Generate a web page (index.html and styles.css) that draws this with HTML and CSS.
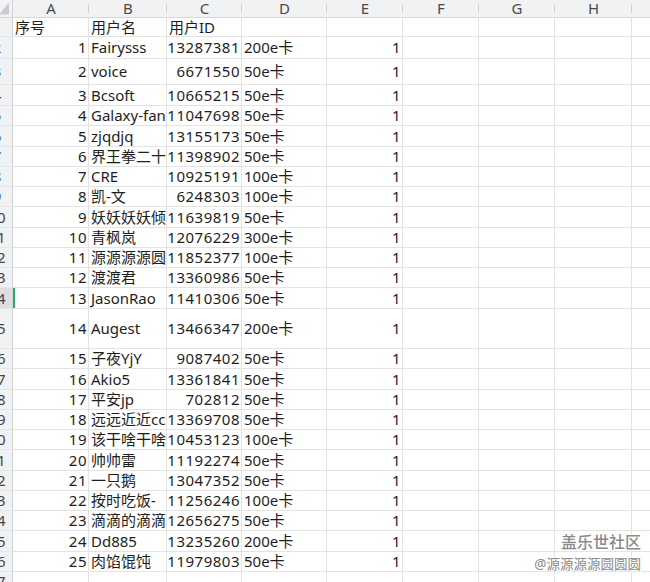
FILE: index.html
```html
<!DOCTYPE html>
<html lang="zh">
<head>
<meta charset="utf-8">
<title>Sheet</title>
<link rel="stylesheet" href="styles.css">
</head>
<body>
<div class="sheet">
  <div class="c corner"><span class="tri"></span></div><div class="c hd">A</div><div class="c hd">B</div><div class="c hd">C</div><div class="c hd">D</div><div class="c hd">E</div><div class="c hd">F</div><div class="c hd">G</div><div class="c hd">H</div><div class="c hd"></div>

  <div class="c rn">1</div><div class="c">序号</div><div class="c">用户名</div><div class="c">用户ID</div><div class="c"></div><div class="c"></div><div class="c"></div><div class="c"></div><div class="c"></div><div class="c"></div>
  <div class="c rn">2</div><div class="c n">1</div><div class="c">Fairysss</div><div class="c n">13287381</div><div class="c">200e卡</div><div class="c n">1</div><div class="c"></div><div class="c"></div><div class="c"></div><div class="c"></div>
  <div class="c rn">3</div><div class="c n">2</div><div class="c">voice</div><div class="c n">6671550</div><div class="c">50e卡</div><div class="c n">1</div><div class="c"></div><div class="c"></div><div class="c"></div><div class="c"></div>
  <div class="c rn">4</div><div class="c n">3</div><div class="c">Bcsoft</div><div class="c n">10665215</div><div class="c">50e卡</div><div class="c n">1</div><div class="c"></div><div class="c"></div><div class="c"></div><div class="c"></div>
  <div class="c rn">5</div><div class="c n">4</div><div class="c">Galaxy-fans</div><div class="c n">11047698</div><div class="c">50e卡</div><div class="c n">1</div><div class="c"></div><div class="c"></div><div class="c"></div><div class="c"></div>
  <div class="c rn">6</div><div class="c n">5</div><div class="c">zjqdjq</div><div class="c n">13155173</div><div class="c">50e卡</div><div class="c n">1</div><div class="c"></div><div class="c"></div><div class="c"></div><div class="c"></div>
  <div class="c rn">7</div><div class="c n">6</div><div class="c">界王拳二十倍</div><div class="c n">11398902</div><div class="c">50e卡</div><div class="c n">1</div><div class="c"></div><div class="c"></div><div class="c"></div><div class="c"></div>
  <div class="c rn">8</div><div class="c n">7</div><div class="c">CRE</div><div class="c n">10925191</div><div class="c">100e卡</div><div class="c n">1</div><div class="c"></div><div class="c"></div><div class="c"></div><div class="c"></div>
  <div class="c rn">9</div><div class="c n">8</div><div class="c">凯-文</div><div class="c n">6248303</div><div class="c">100e卡</div><div class="c n">1</div><div class="c"></div><div class="c"></div><div class="c"></div><div class="c"></div>
  <div class="c rn">10</div><div class="c n">9</div><div class="c">妖妖妖妖倾</div><div class="c n">11639819</div><div class="c">50e卡</div><div class="c n">1</div><div class="c"></div><div class="c"></div><div class="c"></div><div class="c"></div>
  <div class="c rn">11</div><div class="c n">10</div><div class="c">青枫岚</div><div class="c n">12076229</div><div class="c">300e卡</div><div class="c n">1</div><div class="c"></div><div class="c"></div><div class="c"></div><div class="c"></div>
  <div class="c rn">12</div><div class="c n">11</div><div class="c">源源源源圆圆圆</div><div class="c n">11852377</div><div class="c">100e卡</div><div class="c n">1</div><div class="c"></div><div class="c"></div><div class="c"></div><div class="c"></div>
  <div class="c rn">13</div><div class="c n">12</div><div class="c">渡渡君</div><div class="c n">13360986</div><div class="c">50e卡</div><div class="c n">1</div><div class="c"></div><div class="c"></div><div class="c"></div><div class="c"></div>
  <div class="c rn sel-rn">14</div><div class="c n sel">13</div><div class="c">JasonRao</div><div class="c n">11410306</div><div class="c">50e卡</div><div class="c n">1</div><div class="c"></div><div class="c"></div><div class="c"></div><div class="c"></div>
  <div class="c rn">15</div><div class="c n">14</div><div class="c">Augest</div><div class="c n">13466347</div><div class="c">200e卡</div><div class="c n">1</div><div class="c"></div><div class="c"></div><div class="c"></div><div class="c"></div>
  <div class="c rn">16</div><div class="c n">15</div><div class="c">子夜YjY</div><div class="c n">9087402</div><div class="c">50e卡</div><div class="c n">1</div><div class="c"></div><div class="c"></div><div class="c"></div><div class="c"></div>
  <div class="c rn">17</div><div class="c n">16</div><div class="c">Akio5</div><div class="c n">13361841</div><div class="c">50e卡</div><div class="c n">1</div><div class="c"></div><div class="c"></div><div class="c"></div><div class="c"></div>
  <div class="c rn">18</div><div class="c n">17</div><div class="c">平安jp</div><div class="c n">702812</div><div class="c">50e卡</div><div class="c n">1</div><div class="c"></div><div class="c"></div><div class="c"></div><div class="c"></div>
  <div class="c rn">19</div><div class="c n">18</div><div class="c">远远近近ccc</div><div class="c n">13369708</div><div class="c">50e卡</div><div class="c n">1</div><div class="c"></div><div class="c"></div><div class="c"></div><div class="c"></div>
  <div class="c rn">20</div><div class="c n">19</div><div class="c">该干啥干啥</div><div class="c n">10453123</div><div class="c">100e卡</div><div class="c n">1</div><div class="c"></div><div class="c"></div><div class="c"></div><div class="c"></div>
  <div class="c rn">21</div><div class="c n">20</div><div class="c">帅帅雷</div><div class="c n">11192274</div><div class="c">50e卡</div><div class="c n">1</div><div class="c"></div><div class="c"></div><div class="c"></div><div class="c"></div>
  <div class="c rn">22</div><div class="c n">21</div><div class="c">一只鹅</div><div class="c n">13047352</div><div class="c">50e卡</div><div class="c n">1</div><div class="c"></div><div class="c"></div><div class="c"></div><div class="c"></div>
  <div class="c rn">23</div><div class="c n">22</div><div class="c">按时吃饭-</div><div class="c n">11256246</div><div class="c">100e卡</div><div class="c n">1</div><div class="c"></div><div class="c"></div><div class="c"></div><div class="c"></div>
  <div class="c rn">24</div><div class="c n">23</div><div class="c">滴滴的滴滴滴</div><div class="c n">12656275</div><div class="c">50e卡</div><div class="c n">1</div><div class="c"></div><div class="c"></div><div class="c"></div><div class="c"></div>
  <div class="c rn">25</div><div class="c n">24</div><div class="c">Dd885</div><div class="c n">13235260</div><div class="c">200e卡</div><div class="c n">1</div><div class="c"></div><div class="c"></div><div class="c"></div><div class="c"></div>
  <div class="c rn">26</div><div class="c n">25</div><div class="c">肉馅馄饨</div><div class="c n">11979803</div><div class="c">50e卡</div><div class="c n">1</div><div class="c"></div><div class="c"></div><div class="c"></div><div class="c"></div>
  <div class="c rn">27</div><div class="c"></div><div class="c"></div><div class="c"></div><div class="c"></div><div class="c"></div><div class="c"></div><div class="c"></div><div class="c"></div><div class="c"></div>
</div>
<div class="wm">
  <div class="wm1">盖乐世社区</div>
  <div class="wm2">@源源源源圆圆圆</div>
</div>
</body>
</html>
```
FILE: styles.css
```css
html, body {
  margin: 0;
  padding: 0;
  background: #ffffff;
  overflow: hidden;
}
body {
  width: 650px;
  height: 582px;
  position: relative;
  font-family: "Noto Sans", "Noto Sans CJK SC", sans-serif;
  font-size: 15px;
  color: #1e1e1e;
}
.sheet {
  display: grid;
  grid-template-columns: 31px 76px 78px 75px 85px 76px 76px 76px 77px 80px;
  grid-template-rows:
    18px 19px 22px 26px 21px
    20px 21px 20px 20px 20px 21px 20px 20px 20px 21px
    40px
    20px 21px 20px 20px 20px 21px 20px 20px 20px 21px 20px
    20px;
  margin-left: -18px;
  width: max-content;
}
.c {
  box-sizing: border-box;
  border-right: 1px solid #e3e3e3;
  border-bottom: 1px solid #e3e3e3;
  overflow: hidden;
  white-space: nowrap;
  display: flex;
  align-items: center;
  padding: 0 2px;
  line-height: 1;
}
.n {
  justify-content: flex-end;
  padding-right: 1px;
  letter-spacing: 0.5px;
}
.hd {
  position: relative;
  background: #f1f2f4;
  color: #4a4a4a;
  justify-content: center;
  border-right: none;
  border-bottom-color: #d8d8d8;
  font-size: 15px;
}
.hd::after {
  content: "";
  position: absolute;
  right: 0;
  top: 4px;
  bottom: 4px;
  width: 1px;
  background: #d2d2d2;
}
.corner {
  background: #f1f2f4;
  justify-content: flex-end;
  padding-right: 3px;
  border-right-color: #d2d2d2;
  border-bottom-color: #d8d8d8;
}
.tri {
  width: 10px;
  height: 12px;
  background: #c9cbcf;
  clip-path: polygon(100% 0, 100% 100%, 0 100%);
}
.rn {
  background: #f1f2f4;
  color: #444444;
  justify-content: center;
  border-right-color: #d2d2d2;
  border-bottom-color: #e6e7ea;
  padding: 0;
}
.sel-rn {
  background: #dcdee2;
}
.sel {
  box-shadow: inset 2px 0 0 #2ea86b;
}
.wm {
  position: absolute;
  right: 9px;
  top: 531px;
  text-align: right;
  color: #8a8a8a;
  text-shadow: 0 0 1px #ffffff, 0 0 1px #ffffff, 1px 1px 0 #ffffff, -1px -1px 0 #ffffff;
}
.wm1 {
  font-size: 16px;
  line-height: 23px;
  font-weight: 500;
}
.wm2 {
  font-size: 13.5px;
  line-height: 20px;
}
```
